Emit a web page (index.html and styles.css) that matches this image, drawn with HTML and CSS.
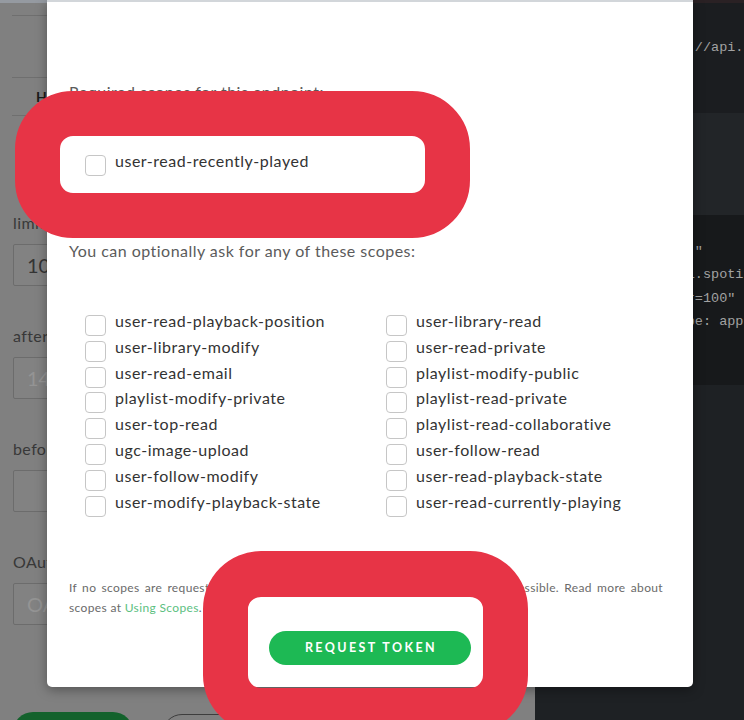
FILE: index.html
```html
<!DOCTYPE html>
<html lang="en">
<head>
<meta charset="utf-8">
<title>Get Recently Played Tracks</title>
<link rel="stylesheet" href="styles.css">
</head>
<body>
<div class="page">
  <main class="docs">
    <div class="rule rule-top"></div>
    <div class="rule rule-head"></div>
    <div class="thead"><b>Header</b></div>
    <div class="rule"></div>

    <div class="label label-first">limit</div>
    <div class="field">10</div>

    <div class="label">after</div>
    <div class="field placeholder">1484811043508</div>

    <div class="label">before</div>
    <div class="field placeholder"></div>

    <div class="label">OAuth Token</div>
    <div class="field placeholder">OAuth Token</div>

    <div class="actions">
      <div class="btn-primary"></div>
      <div class="btn-ghost"></div>
    </div>
  </main>

  <aside class="code">
    <section class="code-url"><pre>curl -X GET https://api.spotify.com/v1/me/player/recently-played</pre></section>
    <section class="code-gap"></section>
    <section class="code-curl"><pre>curl -X "GET" -sS "
       https://api.spotify.com/v1/me/player/recently-played
   ?limit=10&amp;after=100"
   -H "Content-Type: application/json"</pre></section>
    <section class="code-rest"></section>
  </aside>
</div>

<div class="modal">
  <p class="req-title">Required scopes for this endpoint:</p>
  <label class="scope req-row"><span class="box"></span>user-read-recently-played</label>

  <p class="opt-title">You can optionally ask for any of these scopes:</p>
  <div class="scopes">
    <label class="scope"><span class="box"></span>user-read-playback-position</label>
    <label class="scope"><span class="box"></span>user-library-modify</label>
    <label class="scope"><span class="box"></span>user-read-email</label>
    <label class="scope"><span class="box"></span>playlist-modify-private</label>
    <label class="scope"><span class="box"></span>user-top-read</label>
    <label class="scope"><span class="box"></span>ugc-image-upload</label>
    <label class="scope"><span class="box"></span>user-follow-modify</label>
    <label class="scope"><span class="box"></span>user-modify-playback-state</label>
    <label class="scope"><span class="box"></span>user-library-read</label>
    <label class="scope"><span class="box"></span>user-read-private</label>
    <label class="scope"><span class="box"></span>playlist-modify-public</label>
    <label class="scope"><span class="box"></span>playlist-read-private</label>
    <label class="scope"><span class="box"></span>playlist-read-collaborative</label>
    <label class="scope"><span class="box"></span>user-follow-read</label>
    <label class="scope"><span class="box"></span>user-read-playback-state</label>
    <label class="scope"><span class="box"></span>user-read-currently-playing</label>
  </div>

  <p class="note"><span class="note-line">If no scopes are requested, only the publicly available information will be accessible. Read more about</span>scopes at <a href="#">Using Scopes</a>.</p>

  <button class="request">REQUEST TOKEN</button>
</div>

<div class="mark mark-required"></div>
<div class="mark mark-button"></div>
</body>
</html>
```

FILE: styles.css
```css
html, body {
  margin: 0;
  padding: 0;
}

body {
  width: 744px;
  height: 720px;
  overflow: hidden;
  position: relative;
  background: #808080;
  font-family: "Lato", "Noto Sans", sans-serif;
}

.page {
  display: grid;
  grid-template-columns: 535px 209px;
  height: 720px;
}

/* dimmed documentation page */
.docs {
  background: #808080;
  border-top: 3px solid #959aa1;
  padding-left: 13px;
  overflow: hidden;
}

.rule {
  height: 1px;
  background: #6f6f6f;
  margin-left: -1px;
}

.rule-top {
  margin-top: 12px;
}

.rule-head {
  margin-top: 61px;
}

.thead {
  height: 37px;
  line-height: 37px;
  padding-left: 23px;
  font-size: 14px;
  color: #1b1b1b;
}

.label {
  margin-top: 40px;
  font-size: 16px;
  line-height: 20px;
  letter-spacing: 0.4px;
  color: #383838;
}

.label-first {
  margin-top: 97px;
}

.field {
  margin-top: 11px;
  width: 480px;
  height: 42px;
  box-sizing: border-box;
  border: 1px solid #6c6c6c;
  border-radius: 2px;
  background: #828282;
  padding-left: 13px;
  font-size: 20px;
  line-height: 40px;
  color: #343434;
}

.field.placeholder {
  color: #949494;
}

.actions {
  display: flex;
  gap: 29px;
  margin-top: 87px;
}

.btn-primary {
  width: 120px;
  height: 40px;
  border-radius: 20px;
  background: #13622c;
}

.btn-ghost {
  width: 150px;
  height: 38px;
  margin-top: 2px;
  border: 1.5px solid #3d3d3d;
  border-radius: 20px;
}

/* code panel */
.code {
  background: #1e2124;
  display: flex;
  flex-direction: column;
  overflow: hidden;
}

.code pre {
  margin: 0;
  padding-left: 14px;
  font-family: "Liberation Mono", "DejaVu Sans Mono", monospace;
  font-size: 13.5px;
  color: #a2a2a2;
  white-space: pre;
}

.code-url {
  border-top: 3px solid #2a2124;
  background: #1b1d20;
  padding-top: 35px;
  height: 75px;
}

.code-url pre {
  line-height: 20px;
}

.code-gap {
  height: 102px;
  background: #222528;
}

.code-curl {
  height: 145px;
  padding-top: 25px;
  background: #17191b;
}

.code-curl pre {
  line-height: 23.3px;
}

.code-rest {
  flex: 1;
  background: #1e2124;
}

/* modal */
.modal {
  position: absolute;
  left: 47px;
  top: 0;
  width: 646px;
  height: 687px;
  box-sizing: border-box;
  padding: 0 22px;
  background: #fff;
  border-top: 2px solid #d2d6da;
  border-radius: 0 0 5px 5px;
  box-shadow: 0 3px 12px rgba(0, 0, 0, 0.35);
}

.req-title,
.opt-title {
  margin: 0;
  font-size: 16px;
  line-height: 20px;
  letter-spacing: 0.47px;
  color: #5b5b5b;
}

.req-title {
  margin-top: 80px;
}

.req-row {
  margin-top: 46px;
}

.opt-title {
  margin-top: 67px;
}

.scope {
  display: flex;
  align-items: flex-start;
  height: 25.85px;
  line-height: 25.85px;
  font-size: 16px;
  letter-spacing: 0.52px;
  color: #333;
  padding-left: 16px;
  white-space: nowrap;
}

.box {
  flex: none;
  width: 21px;
  height: 21px;
  box-sizing: border-box;
  margin-top: 7px;
  margin-right: 9px;
  border: 1px solid #c6c6c6;
  border-radius: 4px;
  background: #fff;
}

.scopes {
  margin-top: 47px;
  display: grid;
  grid-template-columns: 301px 1fr;
  grid-template-rows: repeat(8, 25.85px);
  grid-auto-flow: column;
}

.note {
  margin: 63px 0 0;
  width: 594px;
  font-size: 12px;
  letter-spacing: 0.35px;
  line-height: 20px;
  color: #6a6a6a;
}

.note-line {
  display: block;
  text-align: justify;
  text-align-last: justify;
}

.note a {
  color: #5cc07f;
  text-decoration: none;
}

.request {
  display: block;
  margin: 13px auto 0;
  width: 202px;
  height: 34px;
  border: 0;
  border-radius: 17px;
  background: #1db954;
  color: #fff;
  font-family: "Lato", "Noto Sans", sans-serif;
  font-weight: 700;
  font-size: 12.5px;
  letter-spacing: 2.4px;
  padding: 0 0 0 2px;
}

/* red annotation rings drawn over the screenshot */
.mark {
  position: absolute;
  box-sizing: border-box;
  border: 45px solid #e73446;
  border-radius: 58px;
}

.mark-required {
  left: 15px;
  top: 91px;
  width: 455px;
  height: 147px;
}

.mark-button {
  left: 203px;
  top: 551px;
  width: 325px;
  height: 182px;
  border-top-width: 46px;
}
```
